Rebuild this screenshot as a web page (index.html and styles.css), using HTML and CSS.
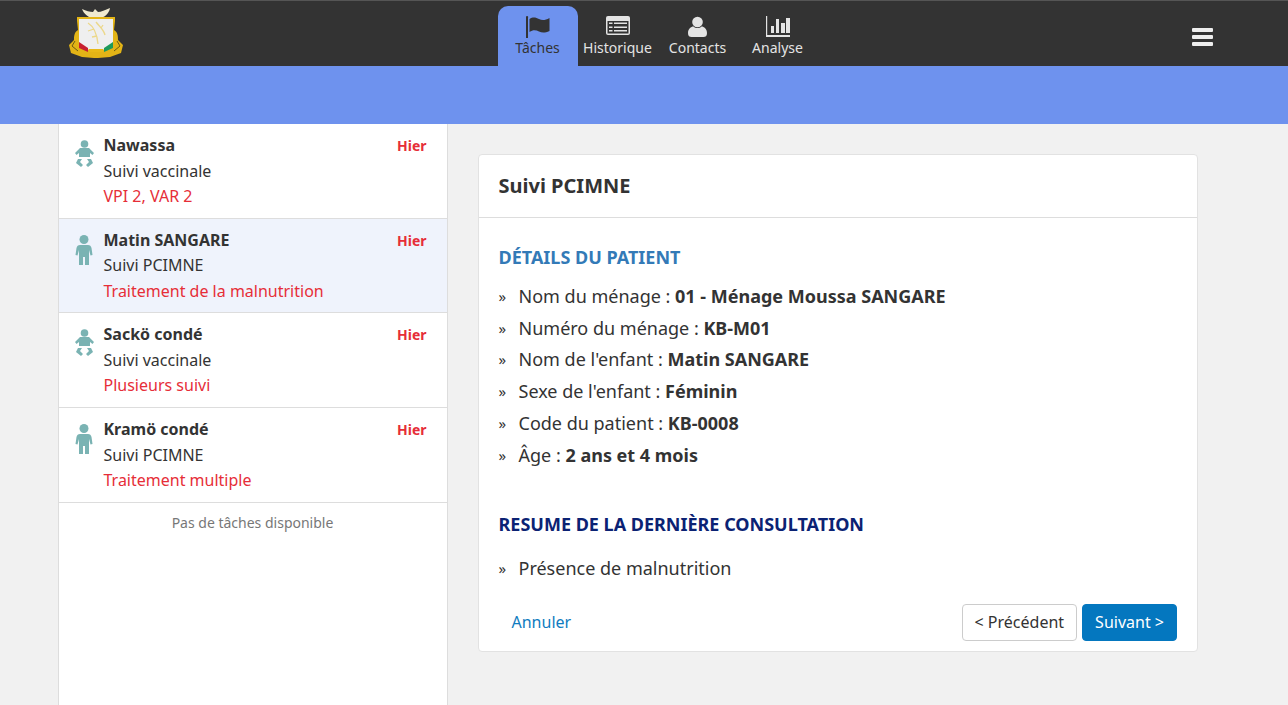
FILE: index.html
```html
<!DOCTYPE html>
<html lang="fr">
<head>
    <meta charset="UTF-8">
    <title>Suivi PCIMNE</title>
    <link rel="stylesheet" href="styles.css">
</head>
<body>

    <header class="top-bar">
        <div class="logo">
            <svg width="56" height="52" viewBox="0 0 56 52">
                <path d="M14 1 C18 3 22 4 25 4 L27 1 L30 4 C33 4 37 2 42 0 C41 6 36 10 31 10 L24 10 C20 9 16 6 14 1 Z" fill="#efe9cf"/>
                <path d="M9 9 H47 V13 L46 22 C50 24 50 29 50 32 L55 37 L53 45 L42 49 L30 50 H26 L14 49 L3 45 L1 37 L6 32 C6 29 6 24 10 22 L9 13 Z" fill="#e3b416"/>
                <path d="M7 33 L4 38 L10 43 M49 33 L52 38 L46 43" stroke="#6b5a14" stroke-width="1" fill="none"/>
                <path d="M11 11 H45 V34 C45 39 40 42 28 42 C16 42 11 39 11 34 Z" fill="#efefef"/>
                <path d="M20 15 C25 18 29 26 30 36 M28 14 C32 19 36 22 37 27 M26 21 L20 23 M29 28 L24 29 M33 20 L35 17" stroke="#ecd88a" stroke-width="1.300" fill="none"/>
                <path d="M11 34 L20 40 L20 44 L11 40 Z" fill="#c8202f"/>
                <path d="M21 41 H35 V44 H21 Z" fill="#e8b918"/>
                <path d="M36 40 L45 34 V40 L36 44 Z" fill="#1d9a5b"/>
            </svg>
        </div>
        <nav class="tabs">
            <a class="tab active">
                <svg width="24" height="22" viewBox="0 0 24 22" fill="currentColor">
                    <circle cx="1" cy="1.200" r="1.200"/>
                    <path d="M0 1 H2 V22 H0 Z"/>
                    <path d="M3.500 3 C7 0.500 10 1.500 13 3 C16 4.500 19 4.500 23.500 2 V15 C19 17 16 17 13 15.500 C10 14 7 13.500 3.500 16 Z"/>
                </svg>
                <span>Tâches</span>
            </a>
            <a class="tab">
                <svg width="24" height="22" viewBox="0 0 24 22">
                    <rect width="24" height="19" rx="2" fill="currentColor"/>
                    <path d="M1.500 5 H22.500 V17.500 H1.500 Z" fill="#333"/>
                    <path d="M3 6.500 H6.500 V8 H3 Z M8 6.500 H21 V8 H8 Z M3 10.500 H6.500 V12 H3 Z M8 10.500 H21 V12 H8 Z M3 14 H6.500 V15.500 H3 Z M8 14 H21 V15.500 H8 Z" fill="currentColor"/>
                </svg>
                <span>Historique</span>
            </a>
            <a class="tab">
                <svg width="19" height="22" viewBox="0 0 19 22" fill="currentColor">
                    <circle cx="9.500" cy="6" r="5.300"/>
                    <path d="M0 17 C0 13 3 10.500 5.500 10.500 C7.500 12.500 11.500 12.500 13.500 10.500 C16 10.500 19 13 19 17 C19 20 17.500 21 15.500 21 H3.500 C1.500 21 0 20 0 17 Z"/>
                </svg>
                <span>Contacts</span>
            </a>
            <a class="tab">
                <svg width="24" height="22" viewBox="0 0 24 22" fill="currentColor">
                    <path d="M0 0 H1.200 V19 H24 V21 H0 Z"/>
                    <path d="M5 10 H8 V17 H5 Z M10 3 H13 V17 H10 Z M15 7 H19 V17 H15 Z M20 2 H24 V17 H20 Z"/>
                </svg>
                <span>Analyse</span>
            </a>
        </nav>
        <div class="menu-btn">
            <span></span>
            <span></span>
            <span></span>
        </div>
    </header>

    <div class="blue-band"></div>

    <div class="page">

        <aside class="task-list">
            <div class="task">
                <svg class="task-icon" width="20" height="28" viewBox="0 0 20 28" fill="#7ab3b3">
                    <circle cx="9.500" cy="4" r="3.800"/>
                    <path d="M5 8 H14 L19 13 L17.500 15 L15 13 V17 H4 V13 L1.500 15 L0 13 Z"/>
                    <path d="M3 19 L7 19 L5 22 L8 25 L6 27 L1 23 Z M16 19 L12 19 L14 22 L11 25 L13 27 L18 23 Z"/>
                </svg>
                <div class="task-text">
                    <div class="task-head"><b>Nawassa</b><span class="when">Hier</span></div>
                    <div>Suivi vaccinale</div>
                    <div class="task-alert">VPI 2, VAR 2</div>
                </div>
            </div>
            <div class="task selected">
                <svg class="task-icon" width="20" height="30" viewBox="1 0 20 30" fill="#7ab3b3">
                    <circle cx="10" cy="4.500" r="4.500"/>
                    <path d="M6 10 H14 C16 10 17 11 17.500 13 L18.500 20 L16.500 20.500 L15 15 V30 H11 V22 H9 V30 H5 V15 L3.500 20.500 L1.500 20 L2.500 13 C3 11 4 10 6 10 Z"/>
                </svg>
                <div class="task-text">
                    <div class="task-head"><b>Matin SANGARE</b><span class="when">Hier</span></div>
                    <div>Suivi PCIMNE</div>
                    <div class="task-alert">Traitement de la malnutrition</div>
                </div>
            </div>
            <div class="task">
                <svg class="task-icon" width="20" height="28" viewBox="0 0 20 28" fill="#7ab3b3">
                    <circle cx="9.500" cy="4" r="3.800"/>
                    <path d="M5 8 H14 L19 13 L17.500 15 L15 13 V17 H4 V13 L1.500 15 L0 13 Z"/>
                    <path d="M3 19 L7 19 L5 22 L8 25 L6 27 L1 23 Z M16 19 L12 19 L14 22 L11 25 L13 27 L18 23 Z"/>
                </svg>
                <div class="task-text">
                    <div class="task-head"><b>Sackö condé</b><span class="when">Hier</span></div>
                    <div>Suivi vaccinale</div>
                    <div class="task-alert">Plusieurs suivi</div>
                </div>
            </div>
            <div class="task">
                <svg class="task-icon" width="20" height="30" viewBox="1 0 20 30" fill="#7ab3b3">
                    <circle cx="10" cy="4.500" r="4.500"/>
                    <path d="M6 10 H14 C16 10 17 11 17.500 13 L18.500 20 L16.500 20.500 L15 15 V30 H11 V22 H9 V30 H5 V15 L3.500 20.500 L1.500 20 L2.500 13 C3 11 4 10 6 10 Z"/>
                </svg>
                <div class="task-text">
                    <div class="task-head"><b>Kramö condé</b><span class="when">Hier</span></div>
                    <div>Suivi PCIMNE</div>
                    <div class="task-alert">Traitement multiple</div>
                </div>
            </div>
            <p class="no-task">Pas de tâches disponible</p>
        </aside>

        <main class="content">
            <section class="card">
                <h1 class="card-title">Suivi PCIMNE</h1>
                <div class="card-body">
                    <h2 class="details-title">DÉTAILS DU PATIENT</h2>
                    <ul class="info-list">
                        <li>Nom du ménage : <b>01 - Ménage Moussa SANGARE</b></li>
                        <li>Numéro du ménage : <b>KB-M01</b></li>
                        <li>Nom de l'enfant : <b>Matin SANGARE</b></li>
                        <li>Sexe de l'enfant : <b>Féminin</b></li>
                        <li>Code du patient : <b>KB-0008</b></li>
                        <li>Âge : <b>2 ans et 4 mois</b></li>
                    </ul>
                    <h2 class="resume-title">RESUME DE LA DERNIÈRE CONSULTATION</h2>
                    <ul class="info-list">
                        <li>Présence de malnutrition</li>
                    </ul>
                </div>
                <div class="card-actions">
                    <a class="cancel">Annuler</a>
                    <div class="buttons">
                        <button class="btn">&lt; Précédent</button>
                        <button class="btn primary">Suivant &gt;</button>
                    </div>
                </div>
            </section>
        </main>

    </div>

</body>
</html>
```

FILE: styles.css
```css
*
{
    margin: 0;
    padding: 0;
    box-sizing: border-box;
}

html, body
{
    height: 100%;
    overflow: hidden;
}

body
{
    display: flex;
    flex-direction: column;
    background: #f1f1f1;
    color: #333;
    font-family: "Noto Sans", sans-serif;
    font-size: 16px;
}

.top-bar
{
    height: 66px;
    flex: none;
    display: flex;
    align-items: flex-end;
    justify-content: space-between;
    padding: 0 75px 0 68px;
    background: #333;
    border-top: 1px solid #555;
}

.logo
{
    width: 56px;
    height: 52px;
    align-self: flex-start;
    margin-top: 7px;
    filter: blur(0.4px);
}

.tabs
{
    display: flex;
    margin-left: -1px;
}

.tab
{
    width: 80px;
    height: 60px;
    display: flex;
    flex-direction: column;
    align-items: center;
    padding-top: 10px;
    color: #e4e4e4;
    font-size: 14px;
    line-height: 19px;
    border-radius: 10px 10px 0 0;
}

.tab.active
{
    background: #6e92ee;
    color: #333;
}

.menu-btn
{
    width: 21px;
    display: flex;
    flex-direction: column;
    gap: 3px;
    align-self: center;
    margin-top: 6px;
}

.menu-btn span
{
    height: 4px;
    background: #eee;
    border-radius: 1px;
}

.blue-band
{
    height: 58px;
    flex: none;
    background: #6e92ee;
}

.page
{
    flex: 1;
    display: flex;
    align-items: stretch;
    padding-left: 57.500px;
}

.task-list
{
    width: 390px;
    flex: none;
    background: #fff;
    border-left: 1px solid #ddd;
    border-right: 1px solid #ddd;
}

.task
{
    display: flex;
    height: 94.700px;
    gap: 9px;
    padding: 9px 20px 0 16px;
    border-bottom: 1px solid #ddd;
    line-height: 25.500px;
}

.task.selected
{
    background: #eff3fc;
}

.task-icon
{
    flex: none;
    margin-top: 7px;
}

.task-text
{
    flex: 1;
}

.task-head
{
    display: flex;
    justify-content: space-between;
}

.when
{
    color: #e62e38;
    font-size: 14px;
    font-weight: bold;
}

.task-alert
{
    color: #e62e38;
}

.no-task
{
    padding-top: 10px;
    text-align: center;
    color: #777;
    font-size: 14px;
    line-height: 20px;
}

.content
{
    flex: 1;
    padding: 30px 90px 0 30px;
}

.card
{
    height: 498px;
    display: flex;
    flex-direction: column;
    background: #fff;
    border: 1px solid #e2e2e2;
    border-radius: 4px;
}

.card-title
{
    height: 63px;
    padding-left: 20px;
    border-bottom: 1px solid #ddd;
    font-size: 20px;
    line-height: 62px;
}

.card-body
{
    flex: 1;
    padding: 26px 20px 0;
}

.details-title
{
    color: #337ab7;
    font-size: 18px;
    line-height: 27px;
}

.resume-title
{
    margin-top: 40px;
    color: #0b2273;
    font-size: 18px;
    line-height: 27px;
}

.info-list
{
    list-style: none;
    margin-top: 10px;
}

.resume-title + .info-list
{
    margin-top: 15px;
}

.info-list li
{
    font-size: 18px;
    line-height: 31.700px;
    padding-left: 20px;
    position: relative;
}

.info-list li::before
{
    content: '»';
    position: absolute;
    left: 0;
    font-size: 15px;
}

.card-actions
{
    display: flex;
    justify-content: space-between;
    align-items: center;
    padding: 0 20px 10px 33px;
}

.cancel
{
    padding-bottom: 2px;
    color: #0f7cc0;
    font-size: 16px;
}

.buttons
{
    display: flex;
    gap: 5px;
}

.btn
{
    height: 37px;
    padding: 0 12px 2px;
    border: 1px solid #ccc;
    border-radius: 4px;
    background: #fff;
    color: #333;
    font-family: inherit;
    font-size: 16px;
}

.btn.primary
{
    background: #0477bf;
    border-color: #0477bf;
    color: #fff;
}
```
